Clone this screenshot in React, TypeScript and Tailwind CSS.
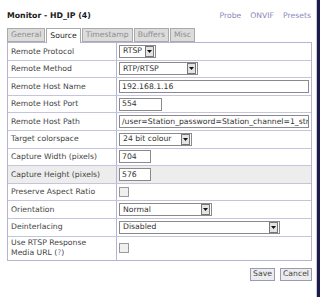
import React from "react";

function Select(props: { value: string; width: string }) {
  return (
    <div
      className={`${props.width} h-[13px] border border-[#8a8a8a] bg-white flex items-center justify-between`}
    >
      <span className="pl-[3px] leading-none text-[#333]">{props.value}</span>
      <span className="w-[9px] h-[11px] border border-[#777] bg-[#e4e4e4] flex items-center justify-center mr-px">
        <svg width="5" height="3" viewBox="0 0 5 3">
          <path d="M0 0h5L2.5 3z" fill="#111" />
        </svg>
      </span>
    </div>
  );
}

function TextInput(props: { value: string; width: string }) {
  return (
    <div
      className={`${props.width} h-[13px] border border-[#8a8a8a] bg-white flex items-center overflow-hidden`}
    >
      <span className="pl-[2px] leading-none whitespace-nowrap text-[#333]">
        {props.value}
      </span>
    </div>
  );
}

function Checkbox() {
  return <div className="w-[10px] h-[10px] border border-[#9a9a9a] bg-[#f0f0f0]" />;
}

const rows: { label: React.ReactNode; field: React.ReactNode; tall?: boolean; shade?: boolean }[] = [
  { label: "Remote Protocol", field: <Select value="RTSP" width="w-[37px]" /> },
  { label: "Remote Method", field: <Select value="RTP/RTSP" width="w-[79px]" /> },
  { label: "Remote Host Name", field: <TextInput value="192.168.1.16" width="w-[190px]" /> },
  { label: "Remote Host Port", field: <TextInput value="554" width="w-[43px]" /> },
  {
    label: "Remote Host Path",
    field: <TextInput value="/user=Station_password=Station_channel=1_str" width="w-[190px]" />,
  },
  { label: "Target colorspace", field: <Select value="24 bit colour" width="w-[73px]" /> },
  { label: "Capture Width (pixels)", field: <TextInput value="704" width="w-[32px]" /> },
  { label: "Capture Height (pixels)", field: <TextInput value="576" width="w-[32px]" />, shade: true },
  { label: "Preserve Aspect Ratio", field: <Checkbox /> },
  { label: "Orientation", field: <Select value="Normal" width="w-[93px]" /> },
  { label: "Deinterlacing", field: <Select value="Disabled" width="w-[161px]" /> },
  {
    label: (
      <span className="leading-[10px] block">
        Use RTSP Response
        <br />
        Media URL (<span className="text-[#8a8ab8]">?</span>)
      </span>
    ),
    field: <Checkbox />,
    tall: true,
  },
];

export default function App() {
  return (
    <div className="w-[320px] h-[297px] bg-white flex font-['DejaVu_Sans',sans-serif] text-[7.7px] text-[#444]">
      <div className="flex-1 pl-[7px] pr-[4px]">
        <div className="flex justify-between items-end pt-[9px] h-[22px]">
          <span className="font-bold text-[7.8px] text-[#1a1a1a]">Monitor - HD_IP (4)</span>
          <div className="flex gap-[9px] text-[#8a8ab8] pr-px">
            <span>Probe</span>
            <span>ONVIF</span>
            <span>Presets</span>
          </div>
        </div>
        <div className="flex gap-px mt-[6px] h-[14px] items-end">
          <div className="h-[14px] px-[3px] border border-[#aaa] bg-[#dcdcdc] text-[#8c8c8c] flex items-center">
            General
          </div>
          <div className="h-[15px] px-[3px] border border-b-0 border-[#aaa] bg-white text-[#222] flex items-center -mb-px relative z-10">
            Source
          </div>
          <div className="h-[14px] px-[3px] border border-[#aaa] bg-[#dcdcdc] text-[#8c8c8c] flex items-center">
            Timestamp
          </div>
          <div className="h-[14px] px-[3px] border border-[#aaa] bg-[#dcdcdc] text-[#8c8c8c] flex items-center">
            Buffers
          </div>
          <div className="h-[14px] px-[3px] border border-[#aaa] bg-[#dcdcdc] text-[#8c8c8c] flex items-center">
            Misc
          </div>
        </div>
        <div className="w-[305px] border border-[#b4b4d4]">
          {rows.map((r, i) => (
            <div
              key={i}
              className={`grid grid-cols-[109px_1fr] ${r.tall ? "h-[23px]" : "h-[17.6px]"} ${
                i < rows.length - 1 ? "border-b border-[#c4c4dc]" : ""
              } ${r.shade ? "bg-[#ededed]" : ""}`}
            >
              <div className="border-r border-[#b4b4d4] pl-[3px] flex items-center">{r.label}</div>
              <div className="pl-[2px] flex items-center">{r.field}</div>
            </div>
          ))}
        </div>
        <div className="flex justify-end gap-[5px] mt-[7px] w-[305px]">
          <div className="h-[13px] px-[2px] border border-[#9a9ab8] bg-[#ececec] flex items-center text-[#444]">
            Save
          </div>
          <div className="h-[13px] px-[2px] border border-[#9a9ab8] bg-[#ececec] flex items-center text-[#444]">
            Cancel
          </div>
        </div>
      </div>
      <div className="w-[4px] border-l border-[#c8c8d8] bg-[#1c1c4c]" />
    </div>
  );
}
